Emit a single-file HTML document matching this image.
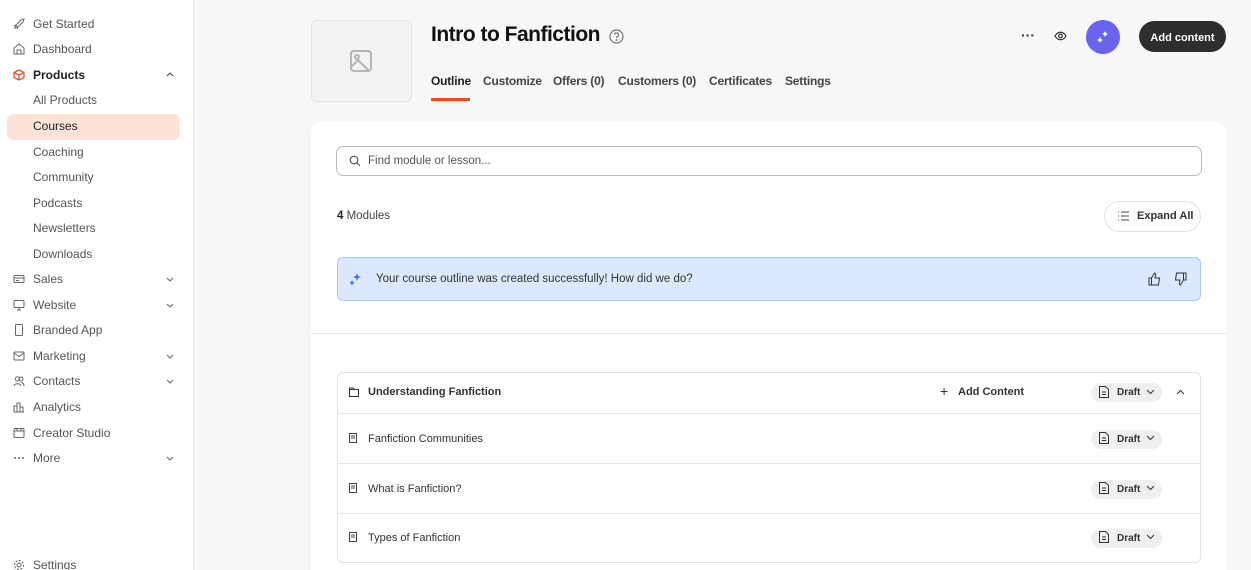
<!DOCTYPE html>
<html><head><meta charset="utf-8"><style>
*{box-sizing:border-box;margin:0;padding:0}
html,body{width:1251px;height:570px;overflow:hidden}
body{background:#f7f7f7;font-family:"Liberation Sans",sans-serif;color:#222;position:relative}
.sb{position:absolute;left:0;top:0;width:194px;height:570px;background:#fff;border-right:1px solid #e8e8e8}
.ni{position:absolute;left:0;width:194px;height:24px;font-size:12px;color:#555;display:flex;align-items:center}
.ni .ic{position:absolute;left:13px;top:6px;width:12px;height:12px}
.ni span{position:absolute;left:33px}
.ni .ch{position:absolute;left:165px;top:7px}
.a{position:absolute}
.tab{position:absolute;top:74px;font-size:12px;font-weight:bold;color:#444;letter-spacing:-0.2px}
.row{position:absolute;left:338px;width:862px;border-top:1px solid #e6e6e6;font-size:11px;color:#333}
.draft{position:absolute;left:753px;width:71px;height:19px;background:#efefef;border-radius:10px;font-size:10px;font-weight:bold;color:#333}
</style></head><body>
<div class="sb">
<div class="ni" style="top:12px"><svg class="ic" viewBox="0 0 12 12" fill="none" stroke="#666" stroke-width="1"><path d="M2 10l2-4 4-4 3-1-1 3-4 4z M3 7l-2 1 M5 9l-1 2"/></svg><span>Get Started</span></div>
<div class="ni" style="top:37px"><svg class="ic" viewBox="0 0 12 12" fill="none" stroke="#666" stroke-width="1"><path d="M1 11V5l5-4 5 4v6z M4 11V7h4v4"/></svg><span>Dashboard</span></div>
<div class="ni" style="top:63px"><svg class="ic" viewBox="0 0 12 12" fill="none" stroke="#e8502c" stroke-width="1.3"><path d="M6 1l5 2.5v5L6 11 1 8.5v-5z M1 3.5L6 6l5-2.5 M6 6v5"/></svg><span style="color:#222;font-weight:bold">Products</span><svg class="ch" width="10" height="10" viewBox="0 0 10 10" fill="none" stroke="#444"><path d="M2 6l3-3 3 3"/></svg></div>
<div class="ni" style="top:88px"><span>All Products</span></div>
<div class="a" style="left:7px;top:114px;width:173px;height:26px;background:#fde3d6;border-radius:6px"></div>
<div class="ni" style="top:114px"><span style="color:#222">Courses</span></div>
<div class="ni" style="top:140px"><span>Coaching</span></div>
<div class="ni" style="top:165px"><span>Community</span></div>
<div class="ni" style="top:191px"><span>Podcasts</span></div>
<div class="ni" style="top:216px"><span>Newsletters</span></div>
<div class="ni" style="top:242px"><span>Downloads</span></div>
<div class="ni" style="top:267px"><svg class="ic" viewBox="0 0 12 12" fill="none" stroke="#666"><rect x="1" y="2.5" width="10" height="7" rx="1"/><path d="M1 5h10M3 7.5h3"/></svg><span>Sales</span><svg class="ch" width="10" height="10" viewBox="0 0 10 10" fill="none" stroke="#666"><path d="M2 4l3 3 3-3"/></svg></div>
<div class="ni" style="top:293px"><svg class="ic" viewBox="0 0 12 12" fill="none" stroke="#666"><rect x="1" y="1.5" width="10" height="7" rx="1"/><path d="M4 11h4M6 8.5v2"/></svg><span>Website</span><svg class="ch" width="10" height="10" viewBox="0 0 10 10" fill="none" stroke="#666"><path d="M2 4l3 3 3-3"/></svg></div>
<div class="ni" style="top:318px"><svg class="ic" viewBox="0 0 12 12" fill="none" stroke="#666"><rect x="2.5" y="0.5" width="7" height="11" rx="1"/></svg><span>Branded App</span></div>
<div class="ni" style="top:344px"><svg class="ic" viewBox="0 0 12 12" fill="none" stroke="#666"><rect x="1" y="2" width="10" height="8" rx="1"/><path d="M1 3l5 3.5L11 3"/></svg><span>Marketing</span><svg class="ch" width="10" height="10" viewBox="0 0 10 10" fill="none" stroke="#666"><path d="M2 4l3 3 3-3"/></svg></div>
<div class="ni" style="top:369px"><svg class="ic" viewBox="0 0 12 12" fill="none" stroke="#666"><circle cx="4.5" cy="4" r="2.2"/><circle cx="8" cy="4" r="2"/><path d="M1 11c0-3 7-3 7 0M8 7.5c2 0 3 1.5 3 3.5"/></svg><span>Contacts</span><svg class="ch" width="10" height="10" viewBox="0 0 10 10" fill="none" stroke="#666"><path d="M2 4l3 3 3-3"/></svg></div>
<div class="ni" style="top:395px"><svg class="ic" viewBox="0 0 12 12" fill="none" stroke="#666"><path d="M1 11V5h3v6M4 11V2h3v9M7 11V6h3v5M1 11h10"/></svg><span>Analytics</span></div>
<div class="ni" style="top:421px"><svg class="ic" viewBox="0 0 12 12" fill="none" stroke="#666"><rect x="1" y="1.5" width="10" height="9" rx="1"/><path d="M1 4h10M4 1.5V4M8 1.5V4"/></svg><span>Creator Studio</span></div>
<div class="ni" style="top:446px"><svg class="ic" viewBox="0 0 12 12" fill="#666"><circle cx="2" cy="6" r="1"/><circle cx="6" cy="6" r="1"/><circle cx="10" cy="6" r="1"/></svg><span>More</span><svg class="ch" width="10" height="10" viewBox="0 0 10 10" fill="none" stroke="#666"><path d="M2 4l3 3 3-3"/></svg></div>
<div class="ni" style="top:553px"><svg class="ic" viewBox="0 0 12 12" fill="none" stroke="#666"><circle cx="6" cy="6" r="2"/><circle cx="6" cy="6" r="4.5" stroke-dasharray="2 1.5"/></svg><span>Settings</span></div>
</div>

<div class="a" style="left:311px;top:20px;width:101px;height:82px;background:#f3f3f3;border:1px solid #e2e2e2;border-radius:6px"></div>
<svg class="a" style="left:349px;top:49px" width="24" height="24" viewBox="0 0 24 24" fill="none" stroke="#b5b5b5" stroke-width="2"><rect x="2" y="2" width="20" height="20" rx="3"/><circle cx="8" cy="8" r="2"/><path d="M2 18l7-7 11 11"/></svg>
<div class="a" style="left:431px;top:23px;font-size:21px;font-weight:bold;color:#111;letter-spacing:-0.5px">Intro to Fanfiction</div>
<svg class="a" style="left:609px;top:29px" width="15" height="15" viewBox="0 0 15 15" fill="none" stroke="#777" stroke-width="1.2"><circle cx="7.5" cy="7.5" r="6.5"/><path d="M5.5 5.8a2 2 0 1 1 2.5 2c-.5.2-.5.6-.5 1.2"/><circle cx="7.5" cy="11" r=".4" fill="#777"/></svg>
<div class="tab" style="left:431px;color:#222">Outline</div>
<div class="a" style="left:431px;top:98px;width:39px;height:3px;background:#ec4a1f"></div>
<div class="tab" style="left:483px">Customize</div>
<div class="tab" style="left:553px">Offers (0)</div>
<div class="tab" style="left:618px">Customers (0)</div>
<div class="tab" style="left:709px">Certificates</div>
<div class="tab" style="left:785px">Settings</div>

<div class="a" style="left:1021px;top:27px;font-size:14px;font-weight:bold;color:#333">···</div>
<svg class="a" style="left:1054px;top:30px" width="13" height="12" viewBox="0 0 13 12" fill="none" stroke="#333" stroke-width="1.2"><path d="M1 6c3-5 8-5 11 0-3 5-8 5-11 0z"/><circle cx="6.5" cy="6" r="1.8"/></svg>
<div class="a" style="left:1086px;top:20px;width:34px;height:34px;border-radius:50%;background:#6a63ef"></div>
<svg class="a" style="left:1096px;top:30px" width="14" height="14" viewBox="0 0 14 14" fill="#fff"><path d="M9 1l1 2 2 1-2 1-1 2-1-2-2-1 2-1z M4 7l1 2 2 1-2 1-1 2-1-2-2-1 2-1z"/></svg>
<div class="a" style="left:1139px;top:21px;width:87px;height:31px;border-radius:16px;background:#2e2e2e;color:#fff;font-size:11px;font-weight:bold;display:flex;align-items:center;justify-content:center;padding-top:2px">Add content</div>

<div class="a" style="left:311px;top:121px;width:915px;height:460px;background:#fff;border-radius:12px"></div>
<div class="a" style="left:336px;top:146px;width:866px;height:30px;border:1px solid #bbb;border-radius:7px"></div>
<svg class="a" style="left:349px;top:155px" width="12" height="12" viewBox="0 0 12 12" fill="none" stroke="#555" stroke-width="1.2"><circle cx="5" cy="5" r="3.8"/><path d="M8 8l3 3"/></svg>
<div class="a" style="left:368px;top:155px;font-size:11.5px;color:#555">Find module or lesson...</div>
<div class="a" style="left:337px;top:210px;font-size:11.5px;color:#444"><b style="color:#222">4</b> Modules</div>
<div class="a" style="left:1104px;top:201px;width:97px;height:31px;border:1px solid #e2e2e2;border-radius:16px;font-size:11px;font-weight:bold;color:#333;line-height:29px;padding-left:32px">Expand All</div>
<svg class="a" style="left:1117px;top:211px" width="12" height="10" viewBox="0 0 12 10" fill="none" stroke="#444"><path d="M4 1h8M4 5h8M4 9h8M1 1h1M1 5h1M1 9h1"/></svg>
<div class="a" style="left:337px;top:257px;width:864px;height:44px;background:#dbe8fd;border:1px solid #a9c9f6;border-radius:6px"></div>
<svg class="a" style="left:348px;top:272px" width="14" height="14" viewBox="0 0 14 14" fill="#2f6fe0"><path d="M9 1l1 3 3 1-3 1-1 3-1-3-3-1 3-1z M4 8l.8 2 2 .8-2 .8L4 14l-.8-2.4-2-.8 2-.8z"/></svg>
<div class="a" style="left:376px;top:273px;font-size:11.5px;color:#333">Your course outline was created successfully! How did we do?</div>
<svg class="a" style="left:1148px;top:272px" width="13" height="14" viewBox="0 0 13 14" fill="none" stroke="#333"><path d="M1 6h2.5v7H1z M3.5 6l3-5c1 0 1.5 1 1 2.5L7 6h4.5l-1 7h-7"/></svg>
<svg class="a" style="left:1174px;top:272px" width="13" height="14" viewBox="0 0 13 14" fill="none" stroke="#333"><path d="M12 8H9.5V1H12z M9.5 8l-3 5c-1 0-1.5-1-1-2.5L6 8H1.5l1-7h7"/></svg>
<div class="a" style="left:311px;top:333px;width:915px;height:1px;background:#e6e6e6"></div>

<div class="a" style="left:337px;top:372px;width:864px;height:191px;border:1px solid #e2e2e2;border-radius:6px"></div>
<div class="row" style="top:372px;height:41px;border-top:none">
<svg class="a" style="left:11px;top:15px" width="10" height="10" viewBox="0 0 10 10" fill="none" stroke="#333"><path d="M.5 2.5h9v7h-9z M.5 2.5V1h4l1 1.5"/></svg>
<div class="a" style="left:30px;top:14px;font-weight:bold">Understanding Fanfiction</div>
<div class="a" style="left:602px;top:11px;font-size:14px">+</div>
<div class="a" style="left:620px;top:14px;font-weight:bold">Add Content</div>
<div class="draft" style="top:11px"><span class="a" style="left:26px;top:4px">Draft</span></div>
<svg class="a" style="left:838px;top:16px" width="9" height="8" viewBox="0 0 9 8" fill="none" stroke="#333"><path d="M1 6l3.5-3.5L8 6"/></svg>
</div>
<div class="row" style="top:413px;height:50px"><div class="a" style="left:30px;top:19px">Fanfiction Communities</div><div class="draft" style="top:16px"><span class="a" style="left:26px;top:4px">Draft</span></div></div>
<div class="row" style="top:463px;height:50px"><div class="a" style="left:30px;top:19px">What is Fanfiction?</div><div class="draft" style="top:16px"><span class="a" style="left:26px;top:4px">Draft</span></div></div>
<div class="row" style="top:513px;height:49px"><div class="a" style="left:30px;top:18px">Types of Fanfiction</div><div class="draft" style="top:15px"><span class="a" style="left:26px;top:4px">Draft</span></div></div>
<script>
[438,488,537].forEach(function(y){document.body.insertAdjacentHTML('beforeend','<svg class="a" style="left:349px;top:'+(y-5)+'px" width="8" height="10" viewBox="0 0 8 10" fill="none" stroke="#444"><rect x=".5" y=".5" width="7" height="9"/><path d="M2 3h4M2 5h4"/></svg>');});
[392,438,488,537].forEach(function(y){document.body.insertAdjacentHTML('beforeend','<svg class="a" style="left:1099px;top:'+(y-6)+'px" width="10" height="12" viewBox="0 0 10 12" fill="none" stroke="#333"><path d="M.5 .5h6l3 3v8h-9z M3 6h4M3 8.5h4"/></svg><svg class="a" style="left:1146px;top:'+(y-4)+'px" width="9" height="8" viewBox="0 0 9 8" fill="none" stroke="#333"><path d="M1 2l3.5 3.5L8 2"/></svg>');});
</script>
</body></html>
